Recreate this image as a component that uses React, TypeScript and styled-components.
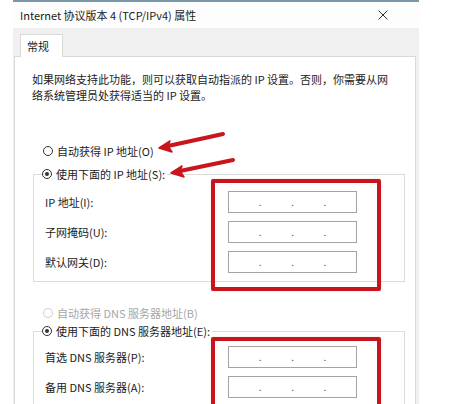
import * as React from "react";
import styled, { createGlobalStyle, css } from "styled-components";

const GlobalStyle = createGlobalStyle`
  html, body {
    margin: 0;
    padding: 0;
    background: #ffffff;
  }
  body {
    font-family: "Noto Sans CJK SC", "Noto Sans", sans-serif;
    color: #1b1b1b;
  }
`;

const Page = styled.div`
  position: relative;
  width: 454px;
  height: 404px;
  overflow: hidden;
  background: #ffffff;
`;

const Window = styled.div`
  margin-left: 13px;
  width: 406px;
  height: 404px;
  box-sizing: border-box;
  border-top: 2px solid #7898aa;
  background: #f0f0f0;
  display: flex;
  flex-direction: column;
`;

const TitleBar = styled.div`
  height: 26px;
  flex: none;
  display: flex;
  align-items: center;
  justify-content: space-between;
  padding: 0 31px 0 7px;
  background: #fdfdfd;
  font-size: 11px;
  line-height: 16px;
  color: #1a1a1a;
`;

const Body = styled.div`
  flex: 1;
  padding: 6px 3px 0 1px;
  display: flex;
  flex-direction: column;
`;

const TabStrip = styled.div`
  display: flex;
  padding-left: 6px;
`;

const Tab = styled.div`
  position: relative;
  z-index: 1;
  height: 23px;
  margin-bottom: -1px;
  padding: 0 13px 0 6px;
  box-sizing: border-box;
  display: flex;
  align-items: center;
  background: #ffffff;
  border: 1px solid #d9d9d9;
  border-bottom: none;
  font-size: 11px;
`;

const Panel = styled.div`
  flex: 1;
  background: #ffffff;
  border: 1px solid #d9d9d9;
  padding: 14px 0 0 17px;
  display: flex;
  flex-direction: column;
  font-size: 11px;
  line-height: 16px;
`;

const Intro = styled.p`
  margin: 0;
  width: 360px;
`;

const RadioRow = styled.div<{ $disabled?: boolean; $top?: number }>`
  display: flex;
  align-items: center;
  gap: 4px;
  height: 16px;
  margin-left: 11px;
  margin-top: ${({ $top }) => $top ?? 0}px;
  ${({ $disabled }) => $disabled && css`
    color: #a6a6a6;
  `}
`;

const RadioDot = styled.span<{ $checked?: boolean; $disabled?: boolean }>`
  width: 10px;
  height: 10px;
  box-sizing: border-box;
  border-radius: 50%;
  border: 1px solid ${({ $disabled }) => ($disabled ? "#cfcfcf" : "#333333")};
  background: #ffffff;
  display: flex;
  align-items: center;
  justify-content: center;
  &::after {
    content: "";
    width: 4px;
    height: 4px;
    border-radius: 50%;
    background: ${({ $checked }) => ($checked ? "#333333" : "transparent")};
  }
`;

const GroupBox = styled.fieldset<{ $top: number; $pad: number }>`
  margin: ${({ $top }) => $top}px 0 0 1px;
  width: 372px;
  box-sizing: border-box;
  border: 1px solid #dcdcdc;
  padding: ${({ $pad }) => $pad}px 0 8px 11px;
  display: grid;
  grid-template-columns: 183px 129px;
  row-gap: 8px;
  align-items: center;
  min-width: 0;
`;

const Legend = styled.legend`
  padding: 0 2px 0 0;
  margin-left: -3px;
  background: #ffffff;
`;

const Label = styled.span`
  line-height: 22px;
`;

const IpBox = styled.div`
  height: 22px;
  box-sizing: border-box;
  border: 1px solid #a3a3a3;
  display: flex;
  align-items: center;
`;

const Field = styled.span`
  flex: 1;
`;

const Dot = styled.span`
  font-size: 10px;
  line-height: 10px;
  color: #444444;
`;

const Callout = styled.div<{ $top: number; $height: number }>`
  position: absolute;
  left: 211px;
  top: ${({ $top }) => $top}px;
  width: 170px;
  height: ${({ $height }) => $height}px;
  box-sizing: border-box;
  border: 4px solid #c8141c;
  border-radius: 2px;
  box-shadow: 0 0 1px rgba(200, 20, 28, 0.5);
  pointer-events: none;
`;

const Arrows = styled.svg`
  position: absolute;
  left: 0;
  top: 0;
  pointer-events: none;
`;

const CloseIcon = () => (
  <svg width="10" height="10" viewBox="0 0 10 10">
    <path d="M0.5 0.5 L9.5 9.5 M9.5 0.5 L0.5 9.5" stroke="#333" strokeWidth="1" />
  </svg>
);

const IpInput = () => (
  <IpBox>
    <Field />
    <Dot>.</Dot>
    <Field />
    <Dot>.</Dot>
    <Field />
    <Dot>.</Dot>
    <Field />
  </IpBox>
);

const ipRows = ["IP 地址(I):", "子网掩码(U):", "默认网关(D):"];
const dnsRows = ["首选 DNS 服务器(P):", "备用 DNS 服务器(A):"];

export default function App() {
  return (
    <Page>
      <GlobalStyle />
      <Window>
        <TitleBar>
          <span>Internet 协议版本 4 (TCP/IPv4) 属性</span>
          <CloseIcon />
        </TitleBar>
        <Body>
          <TabStrip>
            <Tab>常规</Tab>
          </TabStrip>
          <Panel>
            <Intro>
              如果网络支持此功能，则可以获取自动指派的 IP 设置。否则，你需要从网络系统管理员处获得适当的 IP 设置。
            </Intro>
            <RadioRow $top={40}>
              <RadioDot />
              自动获得 IP 地址(O)
            </RadioRow>
            <GroupBox $top={7} $pad={9}>
              <Legend>
                <RadioRow style={{ marginLeft: 0 }}>
                  <RadioDot $checked />
                  使用下面的 IP 地址(S):
                </RadioRow>
              </Legend>
              {ipRows.map((label) => (
                <React.Fragment key={label}>
                  <Label>{label}</Label>
                  <IpInput />
                </React.Fragment>
              ))}
            </GroupBox>
            <RadioRow $disabled $top={23}>
              <RadioDot $disabled />
              自动获得 DNS 服务器地址(B)
            </RadioRow>
            <GroupBox $top={2} $pad={7}>
              <Legend>
                <RadioRow style={{ marginLeft: 0 }}>
                  <RadioDot $checked />
                  使用下面的 DNS 服务器地址(E):
                </RadioRow>
              </Legend>
              {dnsRows.map((label) => (
                <React.Fragment key={label}>
                  <Label>{label}</Label>
                  <IpInput />
                </React.Fragment>
              ))}
            </GroupBox>
          </Panel>
        </Body>
      </Window>

      <Callout $top={179} $height={112} />
      <Callout $top={337} $height={100} />
      <Arrows width="454" height="404" viewBox="0 0 454 404">
        <g fill="#c9161d" stroke="#c9161d" strokeLinecap="round" strokeLinejoin="round">
          <path d="M223 134 L168 146" strokeWidth="4" fill="none" />
          <path d="M159 148 L170 141 L168 146 L172 152 Z" strokeWidth="1.5" />
          <path d="M233 160 L180 171" strokeWidth="4" fill="none" />
          <path d="M171 173 L182 166 L180 171 L184 177 Z" strokeWidth="1.5" />
        </g>
      </Arrows>
    </Page>
  );
}
